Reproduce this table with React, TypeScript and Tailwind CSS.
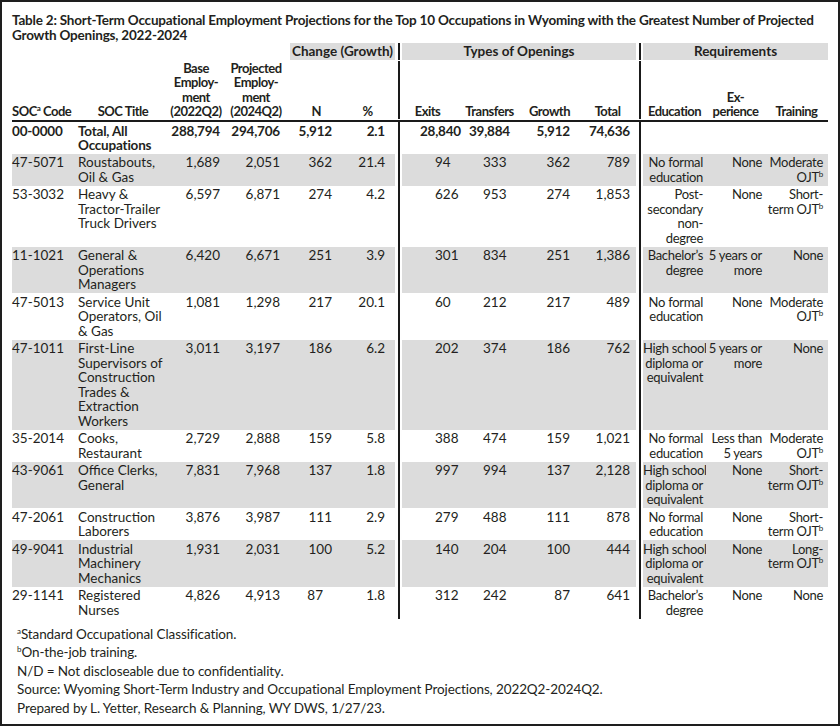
import React from 'react';

type Row = {
  code: string;
  title: string[];
  base: string;
  proj: string;
  n: string;
  pct: string;
  exits: string;
  transfers: string;
  growth: string;
  total: string;
  edu: string[];
  exp: string[];
  train: React.ReactNode[];
  nClass?: string;
};

const Sup = ({ children }: { children: React.ReactNode }) => (
  <sup className="text-[8px] relative -top-[5px] align-baseline">{children}</sup>
);

const Ojt = ({ pre }: { pre: string }) => (
  <>
    {pre}OJT<Sup>b</Sup>
  </>
);

const rows: Row[] = [
  {
    code: '47-5071', title: ['Roustabouts,', 'Oil & Gas'], base: '1,689', proj: '2,051', n: '362', pct: '21.4',
    exits: '94', transfers: '333', growth: '362', total: '789',
    edu: ['No formal', 'education'], exp: ['None'], train: ['Moderate', <Ojt key="o" pre="" />],
  },
  {
    code: '53-3032', title: ['Heavy &', 'Tractor-Trailer', 'Truck Drivers'], base: '6,597', proj: '6,871', n: '274', pct: '4.2',
    exits: '626', transfers: '953', growth: '274', total: '1,853',
    edu: ['Post-', 'secondary', 'non-', 'degree'], exp: ['None'], train: ['Short-', <Ojt key="o" pre="term " />],
  },
  {
    code: '11-1021', title: ['General &', 'Operations', 'Managers'], base: '6,420', proj: '6,671', n: '251', pct: '3.9',
    exits: '301', transfers: '834', growth: '251', total: '1,386',
    edu: ['Bachelor\u2019s', 'degree'], exp: ['5 years or', 'more'], train: ['None'],
  },
  {
    code: '47-5013', title: ['Service Unit', 'Operators, Oil', '& Gas'], base: '1,081', proj: '1,298', n: '217', pct: '20.1',
    exits: '60', transfers: '212', growth: '217', total: '489',
    edu: ['No formal', 'education'], exp: ['None'], train: ['Moderate', <Ojt key="o" pre="" />],
  },
  {
    code: '47-1011', title: ['First-Line', 'Supervisors of', 'Construction', 'Trades &', 'Extraction', 'Workers'],
    base: '3,011', proj: '3,197', n: '186', pct: '6.2',
    exits: '202', transfers: '374', growth: '186', total: '762',
    edu: ['High school', 'diploma or', 'equivalent'], exp: ['5 years or', 'more'], train: ['None'],
  },
  {
    code: '35-2014', title: ['Cooks,', 'Restaurant'], base: '2,729', proj: '2,888', n: '159', pct: '5.8',
    exits: '388', transfers: '474', growth: '159', total: '1,021',
    edu: ['No formal', 'education'], exp: ['Less than', '5 years'], train: ['Moderate', <Ojt key="o" pre="" />],
  },
  {
    code: '43-9061', title: ['Office Clerks,', 'General'], base: '7,831', proj: '7,968', n: '137', pct: '1.8',
    exits: '997', transfers: '994', growth: '137', total: '2,128',
    edu: ['High school', 'diploma or', 'equivalent'], exp: ['None'], train: ['Short-', <Ojt key="o" pre="term " />],
  },
  {
    code: '47-2061', title: ['Construction', 'Laborers'], base: '3,876', proj: '3,987', n: '111', pct: '2.9',
    exits: '279', transfers: '488', growth: '111', total: '878',
    edu: ['No formal', 'education'], exp: ['None'], train: ['Short-', <Ojt key="o" pre="term " />],
  },
  {
    code: '49-9041', title: ['Industrial', 'Machinery', 'Mechanics'], base: '1,931', proj: '2,031', n: '100', pct: '5.2',
    exits: '140', transfers: '204', growth: '100', total: '444',
    edu: ['High school', 'diploma or', 'equivalent'], exp: ['None'], train: ['Long-', <Ojt key="o" pre="term " />],
  },
  {
    code: '29-1141', title: ['Registered', 'Nurses'], base: '4,826', proj: '4,913', n: '87', pct: '1.8',
    exits: '312', transfers: '242', growth: '87', total: '641',
    edu: ['Bachelor\u2019s', 'degree'], exp: ['None'], train: ['None'], nClass: 'pr-[17px]',
  },
];

const cols =
  'grid grid-cols-[64px_94px_52px_60px_58px_55px_7px_63px_49px_59px_63px_7px_63px_59px_63px]';

// vertical rule between column groups
const Sep = () => (
  <div className="flex justify-center">
    <div className="w-[2px] bg-[#1a1a1a]" />
  </div>
);

const Lines = ({ items }: { items: React.ReactNode[] }) => (
  <>
    {items.map((t, i) => (
      <div key={i} className="whitespace-nowrap">{t}</div>
    ))}
  </>
);

const Head = ({ children, className = 'items-center' }: { children: React.ReactNode; className?: string }) => (
  <div className={`flex flex-col justify-end font-bold whitespace-nowrap text-[13px] tracking-[-0.5px] ${className}`}>
    {children}
  </div>
);

const DataRow = ({ r, shaded }: { r: Row; shaded: boolean }) => {
  const bg = shaded ? 'bg-[#dcdcdc]' : '';
  const c = `py-[1.5px] ${bg}`;
  const req = `${c} text-right text-[13px] tracking-[-0.3px]`;
  return (
    <div className={cols}>
      <div className={`${c} whitespace-nowrap`}>{r.code}</div>
      <div className={`${c} pl-[2px]`}><Lines items={r.title} /></div>
      <div className={`${c} text-right pr-[2px]`}>{r.base}</div>
      <div className={`${c} text-right pr-[2px]`}>{r.proj}</div>
      <div className={`${c} text-right ${r.nClass ?? 'pr-[8px]'}`}>{r.n}</div>
      <div className={`${c} text-right pr-[10px]`}>{r.pct}</div>
      <Sep />
      <div className={`${c} pl-[33px]`}>{r.exits}</div>
      <div className={`${c} pl-[18px]`}>{r.transfers}</div>
      <div className={`${c} text-right pr-[3px]`}>{r.growth}</div>
      <div className={`${c} text-right pr-[6px]`}>{r.total}</div>
      <Sep />
      <div className={`${req} pr-[3px]`}><Lines items={r.edu} /></div>
      <div className={`${req} pr-[3px]`}><Lines items={r.exp} /></div>
      <div className={`${req} pr-[5px]`}><Lines items={r.train} /></div>
    </div>
  );
};

export default function App() {
  return (
    <div className="w-[840px] h-[726px] border-2 border-[#1e1e1e] bg-white text-[#231f20] font-['Lato',sans-serif] text-[13.5px] leading-[14.5px] pl-[10px] pt-[11px]">
      <div className="font-bold text-[13.5px] leading-[14.5px] tracking-[-0.2px]">
        <div className="whitespace-nowrap">
          Table 2: Short-Term Occupational Employment Projections for the Top 10 Occupations in Wyoming with the Greatest Number of Projected
        </div>
        <div>Growth Openings, 2022-2024</div>
      </div>

      <div className="w-[816px] mt-[1px]">
        {/* group headings */}
        <div className={`${cols} font-bold`}>
          <div className="col-span-4" />
          <div className="col-span-2 ml-[8px] bg-[#dcdcdc] text-center py-[1px]">Change (Growth)</div>
          <Sep />
          <div className="col-span-4 bg-[#dcdcdc] text-center py-[1px]">Types of Openings</div>
          <Sep />
          <div className="col-span-3 bg-[#dcdcdc] text-center py-[1px]">Requirements</div>
        </div>

        {/* column headings */}
        <div className={`${cols} pt-[1px]`}>
          <Head className="items-start">
            <div>SOC<Sup>a</Sup> Code</div>
          </Head>
          <Head>SOC Title</Head>
          <Head>
            <div>Base</div>
            <div>Employ-</div>
            <div>ment</div>
            <div>(2022Q2)</div>
          </Head>
          <Head className="items-center pl-[8px]">
            <div>Projected</div>
            <div>Employ-</div>
            <div>ment</div>
            <div>(2024Q2)</div>
          </Head>
          <Head className="items-end pr-[19px]">N</Head>
          <Head>%</Head>
          <Sep />
          <Head className="items-center pr-[12px]">Exits</Head>
          <Head>Transfers</Head>
          <Head className="items-end pr-[3px]">Growth</Head>
          <Head className="items-center pl-[6px]">Total</Head>
          <Sep />
          <Head>Education</Head>
          <Head>
            <div>Ex-</div>
            <div>perience</div>
          </Head>
          <Head>Training</Head>
        </div>

        <div className="h-[2px] bg-[#1a1a1a] mt-[1px]" />

        {/* total row */}
        <div className={`${cols} font-bold tracking-[-0.2px]`}>
          <div className="pt-[2px]">00-0000</div>
          <div className="pt-[2px] pb-[1px] pl-[2px]">
            <div>Total, All</div>
            <div>Occupations</div>
          </div>
          <div className="pt-[2px] text-right pr-[2px]">288,794</div>
          <div className="pt-[2px] text-right pr-[2px]">294,706</div>
          <div className="pt-[2px] text-right pr-[8px]">5,912</div>
          <div className="pt-[2px] text-right pr-[10px]">2.1</div>
          <Sep />
          <div className="pt-[2px] text-right pr-[4px]">28,840</div>
          <div className="pt-[2px] text-right pr-[4px]">39,884</div>
          <div className="pt-[2px] text-right pr-[3px]">5,912</div>
          <div className="pt-[2px] text-right pr-[6px]">74,636</div>
          <Sep />
          <div className="col-span-3" />
        </div>

        {rows.map((r, i) => (
          <DataRow key={r.code} r={r} shaded={i % 2 === 0} />
        ))}
      </div>

      <div className="pl-[5px] pt-[6px] text-[13.5px] leading-[18.5px] tracking-[-0.1px]">
        <div><Sup>a</Sup>Standard Occupational Classification.</div>
        <div><Sup>b</Sup>On-the-job training.</div>
        <div>N/D = Not discloseable due to confidentiality.</div>
        <div>Source: Wyoming Short-Term Industry and Occupational Employment Projections, 2022Q2-2024Q2.</div>
        <div>Prepared by L. Yetter, Research &amp; Planning, WY DWS, 1/27/23.</div>
      </div>
    </div>
  );
}
